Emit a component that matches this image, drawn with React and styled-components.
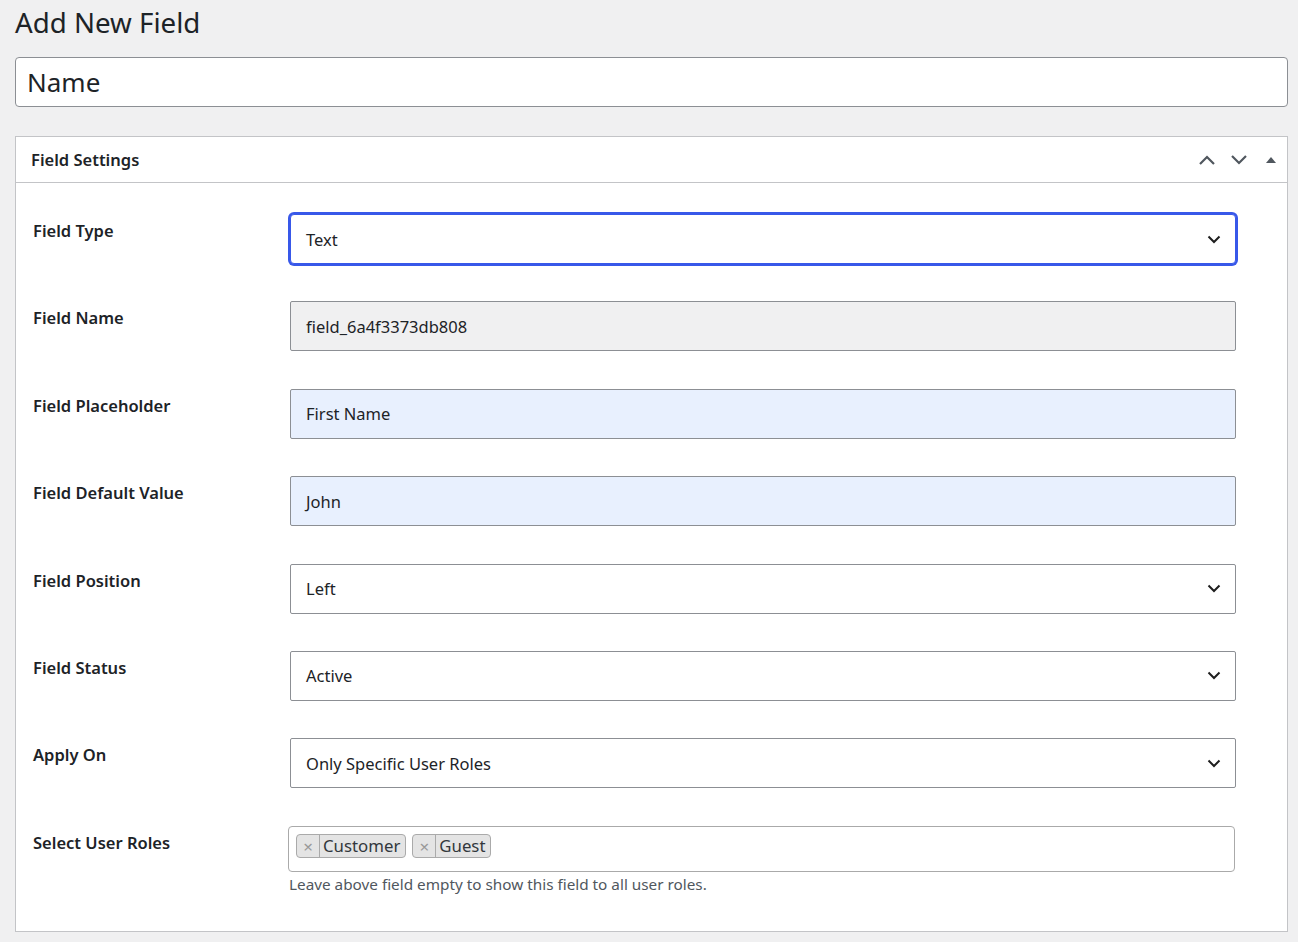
import React from 'react'
import styled, { createGlobalStyle } from 'styled-components'

const GlobalStyle = createGlobalStyle`
  html, body {
    margin: 0;
    padding: 0;
    background: #f0f0f1;
  }
  body {
    font-family: "Noto Sans", "Open Sans", sans-serif;
    color: #1d2327;
  }
`

const rows = [
  { label: 'Field Type', value: 'Text', kind: 'select', focused: true },
  { label: 'Field Name', value: 'field_6a4f3373db808', kind: 'readonly' },
  { label: 'Field Placeholder', value: 'First Name', kind: 'filled' },
  { label: 'Field Default Value', value: 'John', kind: 'filled' },
  { label: 'Field Position', value: 'Left', kind: 'select' },
  { label: 'Field Status', value: 'Active', kind: 'select' },
  { label: 'Apply On', value: 'Only Specific User Roles', kind: 'select' },
]

export default function App() {
  return (
    <Page>
      <GlobalStyle />
      <Title>Add New Field</Title>
      <TitleInput>Name</TitleInput>

      <Postbox>
        <PostboxHeader>
          <h2>Field Settings</h2>
          <HeaderActions>
            <IconButton aria-label='Move up'>
              <svg width='18' height='12' viewBox='0 0 18 12'>
                <path d='M2 10 L9 3 L16 10' fill='none' stroke='#50575e' strokeWidth='2.2' />
              </svg>
            </IconButton>
            <IconButton aria-label='Move down'>
              <svg width='18' height='12' viewBox='0 0 18 12'>
                <path d='M2 2 L9 9 L16 2' fill='none' stroke='#50575e' strokeWidth='2.2' />
              </svg>
            </IconButton>
            <IconButton aria-label='Toggle panel'>
              <svg width='12' height='10' viewBox='0 0 12 10'>
                <path d='M1 8 L6 2 L11 8 Z' fill='#50575e' />
              </svg>
            </IconButton>
          </HeaderActions>
        </PostboxHeader>

        <FormGrid>
          {rows.map((r) => (
            <React.Fragment key={r.label}>
              <Label>{r.label}</Label>
              <Cell>
                <Control $kind={r.kind} $focused={r.focused}>
                  <span>{r.value}</span>
                  {r.kind === 'select' && (
                    <svg width='14' height='9' viewBox='0 0 14 9'>
                      <path d='M1.5 1.5 L7 7 L12.5 1.5' fill='none' stroke='#1e1e1e' strokeWidth='2' />
                    </svg>
                  )}
                </Control>
              </Cell>
            </React.Fragment>
          ))}
          <Label>Select User Roles</Label>
          <Cell>
            <TagBox>
              <Tag>
                <TagRemove>×</TagRemove>
                <TagText>Customer</TagText>
              </Tag>
              <Tag>
                <TagRemove>×</TagRemove>
                <TagText>Guest</TagText>
              </Tag>
            </TagBox>
            <Help>Leave above field empty to show this field to all user roles.</Help>
          </Cell>
        </FormGrid>
      </Postbox>
    </Page>
  )
}

const Page = styled.div`
  padding: 0 10px 0 15px;
`

const Title = styled.h1`
  margin: 0;
  padding: 4px 0 0;
  font-size: 27.7px;
  font-weight: 400;
  line-height: 37px;
  color: #1d2327;
`

const TitleInput = styled.div`
  margin-top: 16px;
  height: 50px;
  box-sizing: border-box;
  border: 1px solid #8c8f94;
  border-radius: 4px;
  background: #fff;
  padding: 0 11px;
  display: flex;
  align-items: center;
  font-size: 26px;
  color: #1d2327;
`

const Postbox = styled.div`
  margin-top: 29px;
  border: 1px solid #c3c4c7;
  background: #fff;
`

const PostboxHeader = styled.div`
  height: 45px;
  border-bottom: 1px solid #c3c4c7;
  display: flex;
  align-items: center;
  justify-content: space-between;
  padding: 0 0 0 15px;

  h2 {
    margin: 0;
    font-size: 16.5px;
    font-weight: 600;
    color: #1d2327;
  }
`

const HeaderActions = styled.div`
  display: flex;
  align-items: center;
`

const IconButton = styled.button`
  width: 32px;
  height: 36px;
  border: 0;
  background: none;
  padding: 0;
  display: flex;
  align-items: center;
  justify-content: center;
  cursor: pointer;
`

const FormGrid = styled.div`
  display: grid;
  grid-template-columns: 257px 946px;
  row-gap: 37.4px;
  padding: 31px 17px 37px 17px;
`

const Label = styled.div`
  font-size: 16.5px;
  font-weight: 600;
  color: #1d2327;
  padding-top: 5px;
`

const Cell = styled.div`
  display: flex;
  flex-direction: column;
`

const Control = styled.div`
  height: 50px;
  box-sizing: border-box;
  border: 1px solid ${(p) => (p.$focused ? '#3858e9' : '#8c8f94')};
  box-shadow: ${(p) => (p.$focused ? '0 0 0 2px #3858e9' : 'none')};
  border-radius: ${(p) => (p.$focused ? '4px' : '2px')};
  background: ${(p) =>
    p.$kind === 'readonly' ? '#f0f0f1' : p.$kind === 'filled' ? '#e8f0fe' : '#fff'};
  display: flex;
  align-items: center;
  justify-content: space-between;
  padding: 0 14px 0 15px;
  font-size: 16.5px;
  color: #1d2327;
`

const TagBox = styled.div`
  margin: 0 1px 0 -2px;
  height: 46px;
  box-sizing: border-box;
  border: 1px solid #aaa;
  border-radius: 4px;
  background: #fff;
  display: flex;
  align-items: flex-start;
  gap: 6px;
  padding: 7px 7px;
`

const Tag = styled.div`
  display: flex;
  align-items: stretch;
  height: 24px;
  box-sizing: border-box;
  border: 1px solid #aaa;
  border-radius: 4px;
  background: #e4e4e4;
  color: #32373c;
`

const TagRemove = styled.span`
  width: 23px;
  display: flex;
  align-items: center;
  justify-content: center;
  padding-top: 2px;
  box-sizing: border-box;
  border-right: 1px solid #aaa;
  color: #999;
  font-size: 17px;
`

const TagText = styled.span`
  display: flex;
  align-items: center;
  padding: 0 5px 0 3px;
  font-size: 16.8px;
`

const Help = styled.p`
  margin: 2px 0 0 -1px;
  font-size: 15.3px;
  color: #50575e;
`
